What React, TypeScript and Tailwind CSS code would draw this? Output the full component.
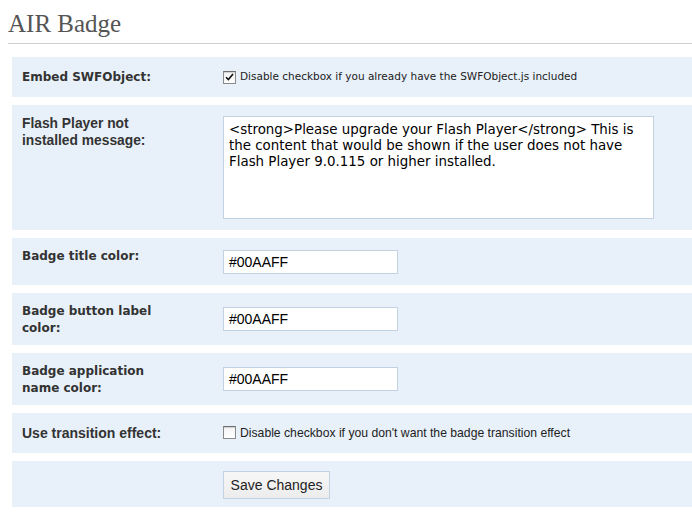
import React from 'react';

const lucida = { fontFamily: '"DejaVu Sans", Verdana, sans-serif' };
const arial = { fontFamily: '"Liberation Sans", Arial, sans-serif' };

const Checkbox: React.FC<{ checked?: boolean }> = ({ checked }) => (
  <span className="inline-flex h-[13px] w-[13px] shrink-0 items-center justify-center border border-[#8a8a8a] border-t-[#6d6d6d] bg-gradient-to-b from-[#f4f4f4] to-white shadow-[inset_0_1px_1px_rgba(0,0,0,0.15)]">
    {checked && (
      <svg width="9" height="8" viewBox="0 0 9 8">
        <path d="M1 4.2 L3.4 6.6 L8 1" fill="none" stroke="#111" strokeWidth="1.6" />
      </svg>
    )}
  </span>
);

const TextInput: React.FC<{ value: string; className?: string }> = ({ value, className }) => (
  <div
    className={`h-[24px] w-[175px] border border-[#c2d2e2] bg-white pl-[5px] text-[14px] leading-[22px] text-black ${className ?? ''}`}
    style={arial}
  >
    {value}
  </div>
);

const App: React.FC = () => {
  return (
    <div className="min-h-[513px] w-[692px] overflow-hidden bg-white">
      <h2 className="pl-[8px] pt-[9px] text-[25px] leading-[30px] text-[#555]" style={{ fontFamily: '"Liberation Serif", Georgia, serif' }}>
        AIR Badge
      </h2>
      <div className="ml-[8px] mt-[4px] h-px bg-[#cfcfcf]" />

      <div className="ml-[12px] mt-[13px] flex flex-col gap-[8px] text-[#333]">
        {/* Embed SWFObject */}
        <div className="flex h-[40px] items-center bg-[#e8f1fa]">
          <div className="w-[211px] pl-[10px] text-[12px] font-bold" style={lucida}>
            Embed SWFObject:
          </div>
          <div className="flex items-center gap-[4px]">
            <Checkbox checked />
            <span className="text-[10.5px] text-[#222]" style={lucida}>
              Disable checkbox if you already have the SWFObject.js included
            </span>
          </div>
        </div>

        {/* Flash Player message */}
        <div className="flex h-[125px] items-start bg-[#e8f1fa]">
          <div className="w-[211px] pl-[10px] pt-[10px] text-[13.8px] font-bold leading-[17px]" style={arial}>
            Flash Player not
            <br />
            installed message:
          </div>
          <div
            className="mt-[11px] h-[103px] w-[431px] border border-[#c2d2e2] bg-white px-[5px] pt-[5px] text-[13.4px] leading-[16px] text-black"
            style={lucida}
          >
            &lt;strong&gt;Please upgrade your Flash Player&lt;/strong&gt; This is the content that would be shown if the user does not have Flash Player 9.0.115 or higher installed.
          </div>
        </div>

        {/* Badge title color */}
        <div className="flex h-[47px] items-start bg-[#e8f1fa]">
          <div className="w-[211px] pl-[10px] pt-[10px] text-[12px] font-bold leading-[17px]" style={lucida}>
            Badge title color:
          </div>
          <TextInput value="#00AAFF" className="mt-[12px]" />
        </div>

        {/* Badge button label color */}
        <div className="flex h-[52px] items-start bg-[#e8f1fa]">
          <div className="w-[211px] pl-[10px] pt-[10px] text-[12px] font-bold leading-[17px]" style={lucida}>
            Badge button label
            <br />
            color:
          </div>
          <TextInput value="#00AAFF" className="mt-[14px]" />
        </div>

        {/* Badge application name color */}
        <div className="flex h-[52px] items-start bg-[#e8f1fa]">
          <div className="w-[211px] pl-[10px] pt-[10px] text-[12px] font-bold leading-[17px]" style={lucida}>
            Badge application
            <br />
            name color:
          </div>
          <TextInput value="#00AAFF" className="mt-[14px]" />
        </div>

        {/* Transition effect */}
        <div className="flex h-[40px] items-center bg-[#e8f1fa]">
          <div className="w-[211px] pl-[10px] text-[14px] font-bold" style={arial}>
            Use transition effect:
          </div>
          <div className="flex items-center gap-[4px]">
            <Checkbox />
            <span className="text-[12.2px] text-[#222]" style={arial}>
              Disable checkbox if you don't want the badge transition effect
            </span>
          </div>
        </div>

        {/* Save */}
        <div className="flex h-[46px] items-start bg-[#e8f1fa]">
          <div className="w-[211px]" />
          <button
            className="mt-[10px] h-[28px] w-[107px] border border-[#c2d2e2] bg-gradient-to-b from-[#f7f7f7] to-[#ececec] text-[14px] text-[#222]"
            style={arial}
          >
            Save Changes
          </button>
        </div>
      </div>
    </div>
  );
};

export default App;
